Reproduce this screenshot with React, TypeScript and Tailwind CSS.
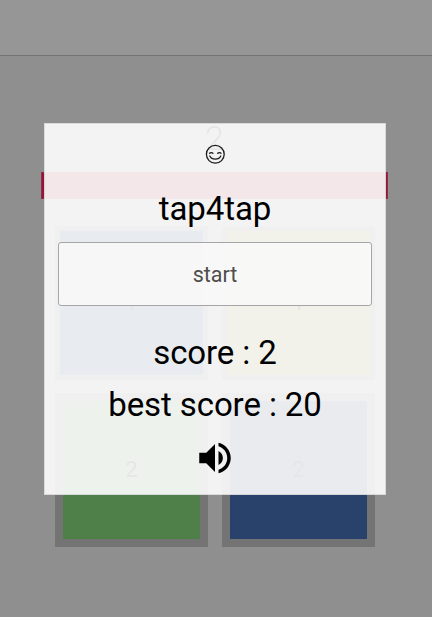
import React from 'react';

const tiles = [
  { label: '1', className: 'border-[5px] bg-[#224c70]' },
  { label: '1', className: 'border-[5px] bg-[#86863c]' },
  { label: '2', className: 'border-8 bg-[#50804a]' },
  { label: '2', className: 'border-8 bg-[#29426b]' },
];

const SmileIcon = () => (
  <svg width="20" height="20" viewBox="0 0 20 20" fill="none" stroke="#1c1c1c" strokeWidth="1.3" strokeLinecap="round">
    <circle cx="10.3" cy="10.3" r="8.9" />
    <path d="M4.6 9.2C5.4 8.4 7.1 8.4 7.9 9.2M12.7 9.2C13.5 8.4 15.2 8.4 16 9.2" />
    <path d="M4.8 12C6.8 16.2 13.8 16.2 15.8 12" />
  </svg>
);

const SoundIcon = () => (
  <svg width="42" height="42" viewBox="0 0 24 24" fill="#000">
    <path d="M3 9v6h4l5 5V4L7 9H3zm13.5 3c0-1.77-1.02-3.29-2.5-4.03v8.05c1.48-.73 2.5-2.25 2.5-4.02zM14 3.23v2.06c2.89.86 5 3.54 5 6.71s-2.11 5.85-5 6.71v2.06c4.01-.91 7-4.49 7-8.77s-2.99-7.86-7-8.77z" />
  </svg>
);

const App = () => {
  return (
    <div className="relative w-[432px] h-[617px] overflow-hidden bg-[#8f8f8f] font-['Roboto',sans-serif]">
      {/* Game board */}
      <header className="h-14 bg-[#969696] border-b border-[#737373]" />
      <main className="flex flex-col">
        <div className="h-[116px] pt-[63px] pr-[3px] text-center text-[34px] leading-[38px] font-light text-[#101010]">2</div>
        <div className="ml-[41px] w-[347px] h-[27px] bg-[#96143a] border border-[#8a3048]" />
        <div className="mt-[27px] ml-[55px] grid grid-cols-[153px_153px] gap-x-[14px] gap-y-[13px]">
          {tiles.map((tile, i) => (
            <div
              key={i}
              className={`h-[154px] border-[#747474] flex items-center justify-center pb-0.5 text-[22px] text-[#101010] ${tile.className}`}
            >
              {tile.label}
            </div>
          ))}
        </div>
      </main>

      {/* Start dialog */}
      <div className="absolute left-[44px] top-[123px] w-[342px] h-[372px] bg-[#fefefe]/90 border border-[#8f8f8f]/25 flex flex-col items-center px-[13px] pt-5 text-black">
        <SmileIcon />
        <h1 className="mt-[24px] text-[33px] leading-[42px] tracking-[-0.1px]">tap4tap</h1>
        <button className="mt-[12px] w-full h-[64px] shrink-0 rounded-[3px] border border-[#a6a6a6] bg-[#f8f8f8]/90 pt-0.5 text-[21.5px] text-[#4d4d4d]">
          start
        </button>
        <p className="mt-[26px] text-[33px] leading-[42px] tracking-[-0.1px]">score : 2</p>
        <p className="mt-[10px] text-[33px] leading-[42px] tracking-[-0.1px]">best score : 20</p>
        <div className="mt-[11px]">
          <SoundIcon />
        </div>
      </div>
    </div>
  );
};

export default App;
